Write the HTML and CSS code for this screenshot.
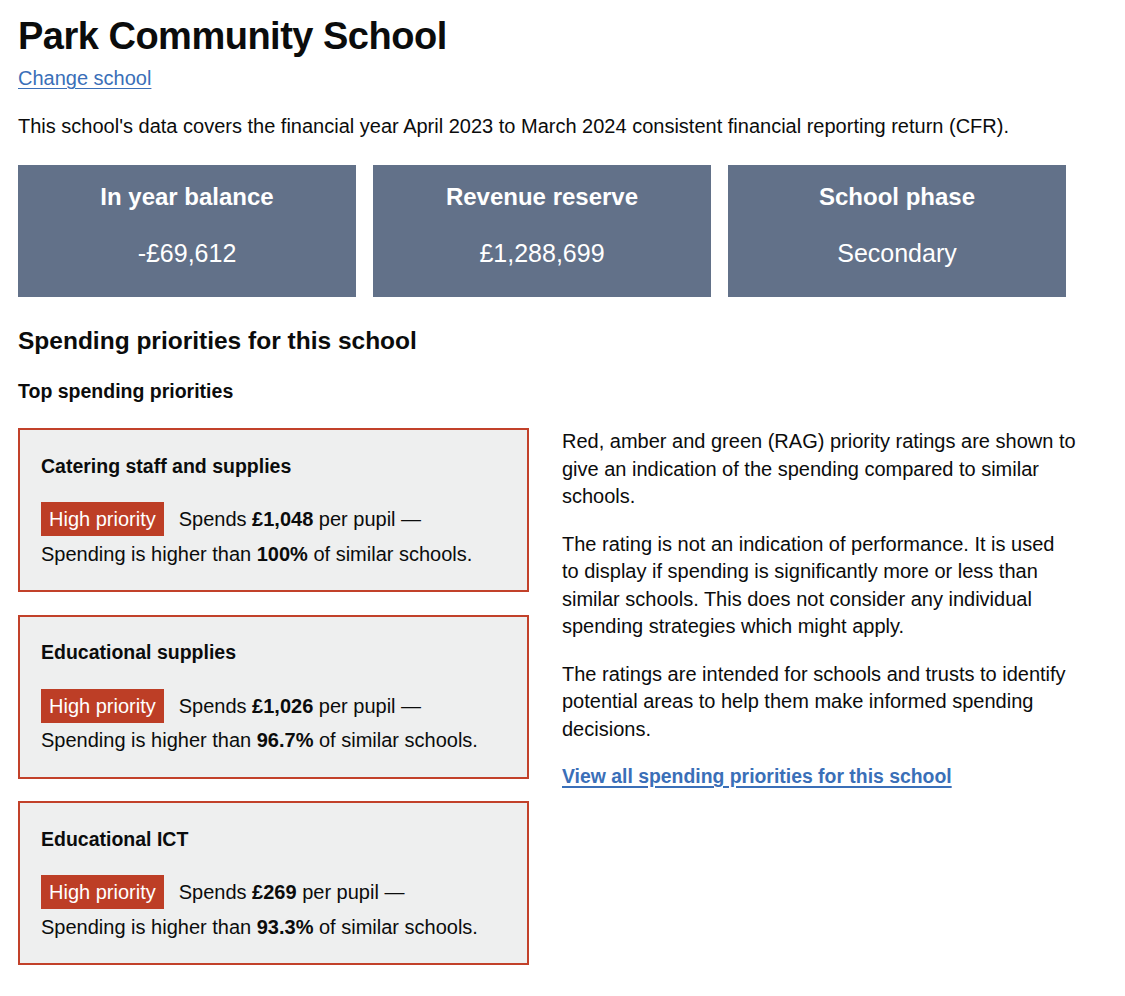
FILE: index.html
```html
<!DOCTYPE html>
<html lang="en">
<head>
<meta charset="utf-8">
<title>Park Community School</title>
<link rel="stylesheet" href="styles.css">
</head>
<body>
<main class="page">
  <h1 class="title">Park Community School</h1>
  <p class="change"><a class="link" href="#">Change school</a></p>
  <p class="intro">This school's data covers the financial year April 2023 to March 2024 consistent financial reporting return (CFR).</p>

  <div class="tiles">
    <div class="tile">
      <h3 class="tile-title">In year balance</h3>
      <p class="tile-value">-£69,612</p>
    </div>
    <div class="tile">
      <h3 class="tile-title">Revenue reserve</h3>
      <p class="tile-value">£1,288,699</p>
    </div>
    <div class="tile">
      <h3 class="tile-title">School phase</h3>
      <p class="tile-value">Secondary</p>
    </div>
  </div>

  <h2 class="heading-m">Spending priorities for this school</h2>
  <h3 class="heading-s">Top spending priorities</h3>

  <div class="columns">
    <div class="col-left">
      <div class="card">
        <h4 class="card-title">Catering staff and supplies</h4>
        <div class="card-row"><strong class="tag">High priority</strong><span>Spends <b>£1,048</b> per pupil —</span></div>
        <p class="card-line">Spending is higher than <b>100%</b> of similar schools.</p>
      </div>
      <div class="card">
        <h4 class="card-title">Educational supplies</h4>
        <div class="card-row"><strong class="tag">High priority</strong><span>Spends <b>£1,026</b> per pupil —</span></div>
        <p class="card-line">Spending is higher than <b>96.7%</b> of similar schools.</p>
      </div>
      <div class="card">
        <h4 class="card-title">Educational ICT</h4>
        <div class="card-row"><strong class="tag">High priority</strong><span>Spends <b>£269</b> per pupil —</span></div>
        <p class="card-line">Spending is higher than <b>93.3%</b> of similar schools.</p>
      </div>
    </div>
    <div class="col-right">
      <p class="body">Red, amber and green (RAG) priority ratings are shown to give an indication of the spending compared to similar schools.</p>
      <p class="body">The rating is not an indication of performance. It is used to display if spending is significantly more or less than similar schools. This does not consider any individual spending strategies which might apply.</p>
      <p class="body">The ratings are intended for schools and trusts to identify potential areas to help them make informed spending decisions.</p>
      <p class="body"><a class="link link-bold" href="#">View all spending priorities for this school</a></p>
    </div>
  </div>
</main>
</body>
</html>
```

FILE: styles.css
```css
* { box-sizing: border-box; }
html, body { margin: 0; padding: 0; background: #ffffff; }
body {
  font-family: "Liberation Sans", Arial, sans-serif;
  color: #0b0c0c;
  font-size: 20px;
  line-height: 25px;
}
.page {
  padding: 12px 18px 20px 18px;
}
.title {
  margin: 0;
  font-size: 38px;
  line-height: 48px;
  font-weight: 700;
  letter-spacing: -0.5px;
}
.change {
  margin: 6px 0 0 0;
}
.link {
  color: #3a6fb8;
  text-decoration: underline;
  text-underline-offset: 3px;
  text-decoration-thickness: 1px;
}
.link-bold {
  font-weight: 700;
  font-size: 19.4px;
  text-decoration-thickness: 2px;
}
.intro {
  margin: 23px 0 0 0;
}
.tiles {
  display: grid;
  grid-template-columns: repeat(3, 338px);
  column-gap: 17px;
  margin-top: 25.5px;
}
.tile {
  background: #627189;
  color: #ffffff;
  text-align: center;
  height: 132px;
  padding: 17.7px 10px 0 10px;
}
.tile-title {
  margin: 0;
  font-size: 24px;
  line-height: 30px;
  font-weight: 700;
}
.tile-value {
  margin: 26.3px 0 0 0;
  font-size: 25px;
  line-height: 30px;
}
.heading-m {
  margin: 29.5px 0 0 0;
  font-size: 24.5px;
  line-height: 30px;
  font-weight: 700;
}
.heading-s {
  margin: 23.3px 0 0 0;
  font-size: 19.5px;
  line-height: 25px;
  font-weight: 700;
}
.columns {
  display: flex;
  gap: 33px;
  margin-top: 24.2px;
  align-items: flex-start;
}
.col-left {
  width: 511px;
  display: flex;
  flex-direction: column;
  gap: 22.5px;
}
.col-right {
  width: 514px;
}
.card {
  background: #eeefef;
  border: 2px solid #c2412a;
  padding: 23.5px 21px 0 21px;
  height: 164px;
}
.card-title {
  margin: 0;
  font-size: 19.5px;
  line-height: 25px;
  font-weight: 700;
}
.card-row {
  display: flex;
  align-items: baseline;
  gap: 15px;
  margin-top: 23.5px;
}
.tag {
  display: inline-block;
  background: #bd3e26;
  color: #ffffff;
  font-weight: 400;
  padding: 5px 8px 4px 8px;
}
.card-line {
  margin: 5.5px 0 0 0;
}
.body {
  margin: 0 0 20px 0;
  line-height: 27.5px;
}
```
